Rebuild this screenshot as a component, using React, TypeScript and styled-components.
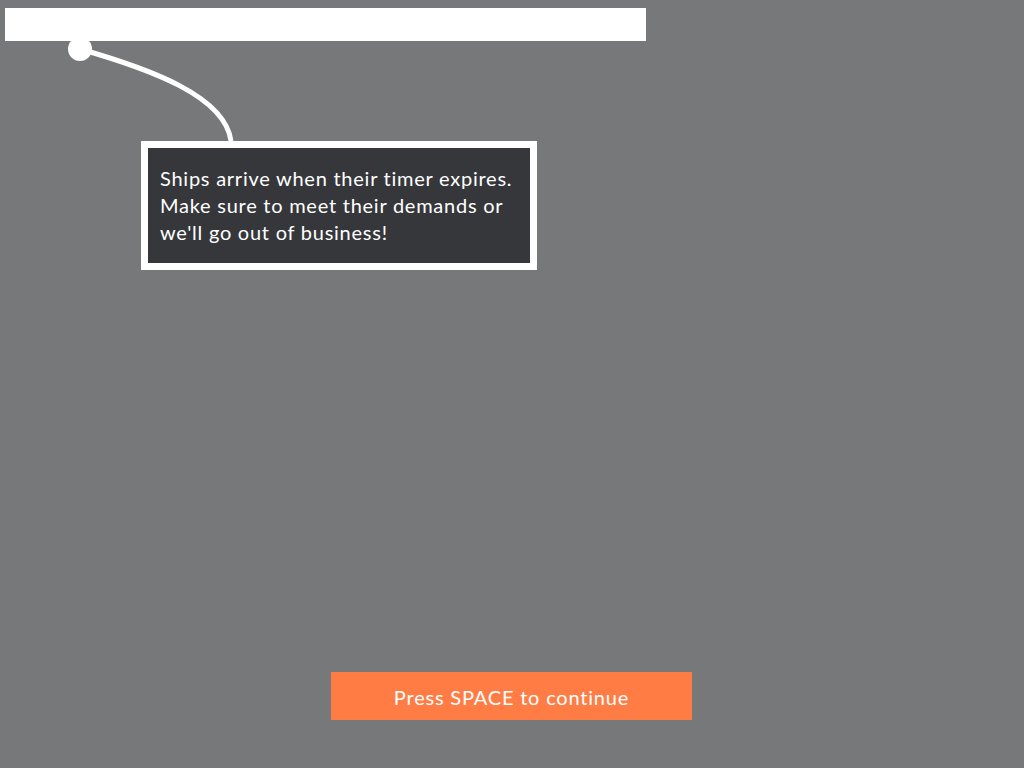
import React from "react";
import styled, { createGlobalStyle } from "styled-components";

const Global = createGlobalStyle`
  html, body { margin: 0; padding: 0; background: #77787a; }
  body { font-family: "Lato", "Open Sans", sans-serif; }
`;

const Stage = styled.div`
  position: relative;
  width: 1024px;
  height: 768px;
  display: flex;
  flex-direction: column;
  overflow: hidden;
  background: #77787a;
`;

const Highlight = styled.div`
  margin: 8px 0 0 5px;
  width: 641px;
  height: 33px;
  background: #ffffff;
`;

const Connector = styled.svg`
  display: block;
  width: 300px;
  height: 100px;
  overflow: visible;
`;

const Tooltip = styled.div`
  box-sizing: border-box;
  margin-left: 141px;
  width: 396px;
  border: 7px solid #ffffff;
  background: #36373b;
  padding: 17px 8px 17px 12px;
  color: #ffffff;
  font-size: 20px;
  line-height: 27px;
  letter-spacing: 0.75px;
`;

const ContinueButton = styled.div`
  margin: auto 0 48px 331px;
  width: 361px;
  height: 48px;
  background: #ff7d45;
  color: #ffffff;
  font-size: 20px;
  letter-spacing: 0.8px;
  display: flex;
  align-items: center;
  justify-content: center;
  padding-top: 2px;
  box-sizing: border-box;
`;

export default function App() {
  return (
    <Stage>
      <Global />
      <Highlight />
      <Connector viewBox="0 0 300 100">
        <path d="M80 8 C 150 28, 225 55, 231 100" fill="none" stroke="#ffffff" strokeWidth="5" />
        <ellipse cx="80" cy="8" rx="12" ry="12" fill="#ffffff" />
      </Connector>
      <Tooltip>
        Ships arrive when their timer expires. Make sure to meet their demands or we'll go out of business!
      </Tooltip>
      <ContinueButton>Press SPACE to continue</ContinueButton>
    </Stage>
  );
}
